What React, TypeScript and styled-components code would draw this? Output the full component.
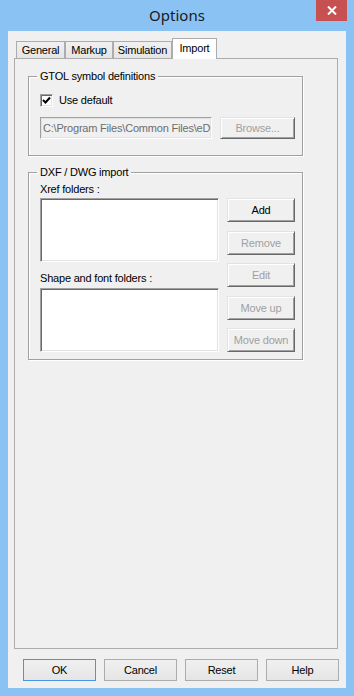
import React from "react";
import styled, { createGlobalStyle, css } from "styled-components";

const GlobalStyle = createGlobalStyle`
  html, body {
    margin: 0;
    padding: 0;
  }
  body {
    width: 354px;
    height: 696px;
    overflow: hidden;
    font-family: "Liberation Sans", Arial, sans-serif;
    font-size: 11px;
    letter-spacing: -0.2px;
    color: #000;
  }
  * {
    box-sizing: border-box;
  }
`;

const Window = styled.div`
  width: 354px;
  height: 696px;
  background: #8bc2f4;
  display: flex;
  flex-direction: column;
`;

const TitleBar = styled.div`
  height: 31px;
  display: grid;
  grid-template-columns: 1fr auto 1fr;
  align-items: start;
`;

const Title = styled.div`
  grid-column: 2;
  font-family: "Noto Sans", "Open Sans", sans-serif;
  font-size: 15px;
  letter-spacing: 0;
  line-height: 30px;
  color: #1a1a1a;
`;

const CloseButton = styled.div`
  grid-column: 3;
  justify-self: end;
  width: 31px;
  height: 21px;
  margin-right: 7px;
  background: #c75050;
  display: flex;
  align-items: center;
  justify-content: center;
`;

const Client = styled.div`
  flex: 1;
  margin: 0 8px 8px;
  background: #f0f0f0;
  display: flex;
  flex-direction: column;
  padding: 7px 7px 7px 6px;
`;

const TabStrip = styled.div`
  display: flex;
  align-items: flex-end;
  height: 21px;
  padding-left: 2px;
  margin-bottom: -1px;
  position: relative;
  z-index: 1;
`;

const Tab = styled.div<{ $w: number; $active?: boolean }>`
  width: ${(p) => p.$w}px;
  border: 1px solid #acacac;
  border-bottom: none;
  display: flex;
  align-items: center;
  justify-content: center;
  ${(p) =>
    p.$active
      ? css`
          height: 21px;
          background: #fff;
          padding-bottom: 3px;
        `
      : css`
          height: 17px;
          margin-bottom: 1px;
          background: linear-gradient(#f0f0f0, #e5e5e5);
        `}
`;

const Panel = styled.div`
  flex: 1;
  margin-right: 1px;
  border: 1px solid #acacac;
  background: #f0f0f0;
  padding: 11px 0 0 13px;
`;

const Group = styled.fieldset<{ $gapTop?: number; $pad: string }>`
  width: 275px;
  margin: ${(p) => p.$gapTop ?? 0}px 0 0;
  padding: ${(p) => p.$pad};
  border: 1px solid #a0a0a0;
  box-shadow: 1px 1px 0 #fff, inset 1px 1px 0 #fff;
  min-width: 0;
`;

const Legend = styled.legend`
  padding: 0 3px;
  margin-left: -3px;
  line-height: 13px;
  background: #f0f0f0;
`;

const CheckRow = styled.label`
  display: flex;
  align-items: center;
  gap: 6px;
  height: 13px;
  line-height: 13px;
`;

const CheckBox = styled.span`
  width: 13px;
  height: 13px;
  background: #fff;
  border: 1px solid;
  border-color: #a0a0a0 #fff #fff #a0a0a0;
  box-shadow: inset 1px 1px 0 #696969, inset -1px -1px 0 #e3e3e3;
  display: flex;
  align-items: center;
  justify-content: center;
`;

const Row = styled.div<{ $gap?: number }>`
  display: flex;
  gap: 8px;
  margin-top: ${(p) => p.$gap ?? 0}px;
`;

const TextField = styled.div`
  width: 172px;
  height: 22px;
  border: 1px solid;
  border-color: #a0a0a0 #fff #fff #a0a0a0;
  box-shadow: inset 0 0 0 1px #e3e3e3;
  background: #f0f0f0;
  color: #6d6d6d;
  padding: 0 2px;
  line-height: 20px;
  white-space: nowrap;
  overflow: hidden;
`;

const ClassicButton = styled.div<{ $w: number; $h: number; $disabled?: boolean }>`
  width: ${(p) => p.$w}px;
  height: ${(p) => p.$h}px;
  border: 1px solid;
  border-color: #e3e3e3 #696969 #696969 #e3e3e3;
  box-shadow: inset 1px 1px 0 #fff, inset -1px -1px 0 #a0a0a0;
  background: #f0f0f0;
  display: flex;
  align-items: center;
  justify-content: center;
  color: ${(p) => (p.$disabled ? "#a0a0a0" : "#000")};
`;

const FieldLabel = styled.div<{ $gap?: number }>`
  line-height: 13px;
  margin-top: ${(p) => p.$gap ?? 0}px;
`;

const ListsColumn = styled.div`
  width: 179px;
  display: flex;
  flex-direction: column;
`;

const ListBox = styled.div<{ $gap?: number }>`
  height: 64px;
  margin-top: ${(p) => p.$gap ?? 0}px;
  background: #fff;
  border: 1px solid;
  border-color: #a0a0a0 #fff #fff #a0a0a0;
  box-shadow: inset 1px 1px 0 #696969, inset -1px -1px 0 #e3e3e3;
`;

const ButtonsColumn = styled.div`
  display: flex;
  flex-direction: column;
  justify-content: space-between;
`;

const Footer = styled.div`
  display: flex;
  justify-content: flex-end;
  gap: 8px;
  margin-top: 10px;
`;

const DialogButton = styled.div<{ $default?: boolean }>`
  width: 73px;
  height: 22px;
  border: 1px solid ${(p) => (p.$default ? "#4a94e6" : "#acacac")};
  background: linear-gradient(#f0f0f0, #e5e5e5);
  display: flex;
  align-items: center;
  justify-content: center;
`;

const tabs = [
  { label: "General", w: 49 },
  { label: "Markup", w: 48 },
  { label: "Simulation", w: 59 },
  { label: "Import", w: 45, active: true },
];

const sideButtons = [
  { label: "Add", disabled: false },
  { label: "Remove", disabled: true },
  { label: "Edit", disabled: true },
  { label: "Move up", disabled: true },
  { label: "Move down", disabled: true },
];

export default function App() {
  return (
    <>
      <GlobalStyle />
      <Window>
        <TitleBar>
          <Title>Options</Title>
          <CloseButton>
            <svg width="10" height="9" viewBox="0 0 10 9">
              <path d="M1 0.5 L9 8.5 M9 0.5 L1 8.5" stroke="#fff" strokeWidth="2" />
            </svg>
          </CloseButton>
        </TitleBar>
        <Client>
          <TabStrip>
            {tabs.map((t) => (
              <Tab key={t.label} $w={t.w} $active={t.active}>
                {t.label}
              </Tab>
            ))}
          </TabStrip>
          <Panel>
            <Group $pad="11px 6px 16px 11px">
              <Legend>GTOL symbol definitions</Legend>
              <CheckRow>
                <CheckBox>
                  <svg width="9" height="9" viewBox="0 0 9 9">
                    <path d="M1 4 L3.5 6.5 L8 1.5" stroke="#000" strokeWidth="2" fill="none" />
                  </svg>
                </CheckBox>
                Use default
              </CheckRow>
              <Row $gap={10}>
                <TextField>C:\Program Files\Common Files\eD</TextField>
                <ClassicButton $w={75} $h={22} $disabled>
                  Browse...
                </ClassicButton>
              </Row>
            </Group>
            <Group $gapTop={10} $pad="4px 6px 7px 11px">
              <Legend>DXF / DWG import</Legend>
              <FieldLabel>Xref folders :</FieldLabel>
              <Row $gap={2}>
                <ListsColumn>
                  <ListBox />
                  <FieldLabel $gap={10}>Shape and font folders :</FieldLabel>
                  <ListBox $gap={3} />
                </ListsColumn>
                <ButtonsColumn>
                  {sideButtons.map((b) => (
                    <ClassicButton key={b.label} $w={68} $h={24} $disabled={b.disabled}>
                      {b.label}
                    </ClassicButton>
                  ))}
                </ButtonsColumn>
              </Row>
            </Group>
          </Panel>
          <Footer>
            <DialogButton $default>OK</DialogButton>
            <DialogButton>Cancel</DialogButton>
            <DialogButton>Reset</DialogButton>
            <DialogButton>Help</DialogButton>
          </Footer>
        </Client>
      </Window>
    </>
  );
}
